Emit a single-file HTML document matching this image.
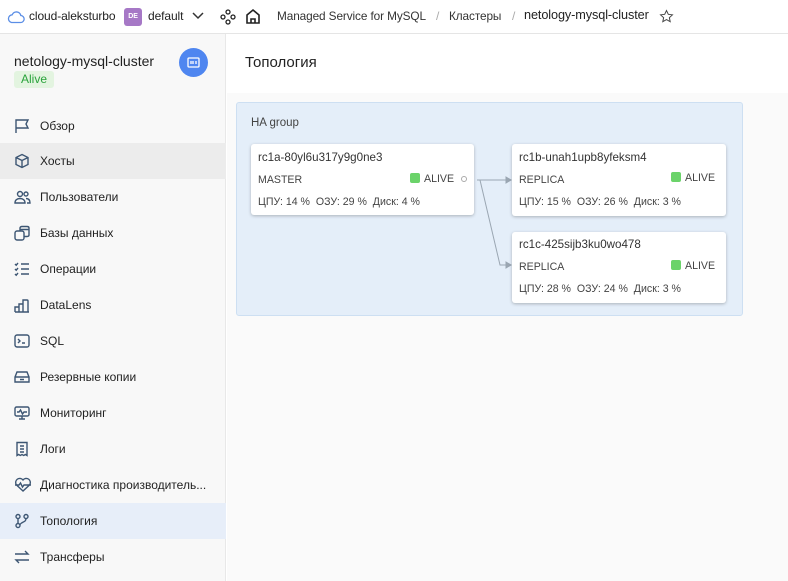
<!DOCTYPE html>
<html><head><meta charset="utf-8"><style>
*{box-sizing:border-box;margin:0;padding:0}
body{width:788px;height:581px;overflow:hidden;background:#fff;font-family:"Liberation Sans","Noto Sans CJK SC",sans-serif;color:#222;position:relative}
.hdr{position:absolute;left:0;top:0;width:788px;height:34px;border-bottom:1px solid #e5e5e5;font-size:12px;letter-spacing:-0.1px}
.hdr span{position:absolute;top:9px;white-space:nowrap}
.side{position:absolute;left:0;top:34px;width:226px;height:547px;background:#f8f8f8;border-right:1px solid #e8e8e8}
.item{position:absolute;left:0;width:226px;height:36px;font-size:12px;line-height:36px;padding-left:40px;white-space:nowrap}
.item svg{position:absolute;left:14px;top:10px}
.main{position:absolute;left:227px;top:93px;width:561px;height:488px;background:#fafafa}
.grp{position:absolute;left:236px;top:102px;width:507px;height:214px;background:#e4eef9;border:1px solid #cddff2;border-radius:3px}
.card{position:absolute;background:#fff;border-radius:3px;box-shadow:0 1px 3px rgba(0,0,0,.25);font-size:10.6px;color:#444}
.card div{position:absolute;left:7px;white-space:nowrap}
.sq{display:inline-block;width:10px;height:10px;background:#6bd36a;border-radius:2px;vertical-align:-1px;margin-right:4px}
</style></head><body>
<div class="hdr">
<svg style="position:absolute;left:7px;top:10px" width="18" height="14" viewBox="0 0 18 14"><path d="M4.5 12.5h9a3.5 3.5 0 0 0 .3-7A4.5 4.5 0 0 0 5.2 4.8 3.9 3.9 0 0 0 4.5 12.5z" fill="none" stroke="#5b8ee6" stroke-width="1.3"/></svg>
<span style="left:29px;color:#222">cloud-aleksturbo</span>
<div style="position:absolute;left:124px;top:8px;width:18px;height:18px;background:#a678c6;border-radius:3px;color:#fff;font-size:7px;font-weight:bold;text-align:center;line-height:18px">DE</div>
<span style="left:148px">default</span>
<svg style="position:absolute;left:192px;top:12px" width="12" height="8"><path d="M1 1l5 5 5-5" fill="none" stroke="#333" stroke-width="1.5"/></svg>
<svg style="position:absolute;left:220px;top:9px" width="16" height="16" viewBox="0 0 16 16" fill="none" stroke="#222" stroke-width="1.3"><circle cx="8" cy="3" r="2"/><circle cx="3" cy="8" r="2"/><circle cx="13" cy="8" r="2"/><circle cx="8" cy="13" r="2"/></svg>
<svg style="position:absolute;left:245px;top:8px" width="16" height="17" viewBox="0 0 16 17" fill="none" stroke="#222" stroke-width="1.6"><path d="M2 7l6-5 6 5v8H2z"/><path d="M6 15v-4h4v4"/></svg>
<span style="left:277px;color:#333;font-size:11.8px">Managed Service for MySQL</span>
<span style="left:436px;color:#aaa">/</span>
<span style="left:449px;color:#333;font-size:11.8px">Кластеры</span>
<span style="left:512px;color:#aaa">/</span>
<span style="left:524px;color:#222;font-size:12.7px;top:8px">netology-mysql-cluster</span>
<svg style="position:absolute;left:659px;top:9px" width="15" height="15" viewBox="0 0 24 24"><path d="M12 2.5l2.9 6 6.6.8-4.9 4.5 1.3 6.5L12 17l-5.9 3.3 1.3-6.5L2.5 9.3l6.6-.8z" fill="none" stroke="#444" stroke-width="1.6"/></svg>
</div>
<div class="side">
<div style="position:absolute;left:14px;top:19px;font-size:14px;color:#222">netology-mysql-cluster</div>
<div style="position:absolute;left:14px;top:37px;height:17px;padding:0 7px;background:#e3f4e0;border-radius:3px;color:#2aa33b;font-size:12px;line-height:17px">Alive</div>
<div style="position:absolute;left:179px;top:14px;width:29px;height:29px;border-radius:50%;background:#4f86f0"><svg style="position:absolute;left:8px;top:8px" width="13" height="13" viewBox="0 0 13 13" fill="none" stroke="#fff" stroke-width="1.3"><rect x="1" y="2" width="11" height="9" rx="1"/><path d="M4 5v3M6 5v3M9 5v3"/></svg></div>
</div>
<div class="item" style="top:108px">Обзор<svg width="16" height="16" viewBox="0 0 16 16" fill="none" stroke="#3d5673" stroke-width="1.4"><path d="M2 15V2h12l-2 4 2 4H2"/></svg></div>
<div class="item" style="top:143px;background:#ececec">Хосты<svg width="16" height="16" viewBox="0 0 16 16" fill="none" stroke="#3d5673" stroke-width="1.4"><path d="M8 1.5l6 3v7l-6 3-6-3v-7zM2 4.5l6 3 6-3M8 7.5v7"/></svg></div>
<div class="item" style="top:179px">Пользователи<svg width="17" height="16" viewBox="0 0 17 16" fill="none" stroke="#3d5673" stroke-width="1.4"><circle cx="6" cy="5" r="2.5"/><circle cx="12" cy="5" r="2"/><path d="M1 14c0-3 2-4.5 5-4.5s5 1.5 5 4.5zM12 9.5c2.5 0 4 1.3 4 4.5h-3"/></svg></div>
<div class="item" style="top:215px">Базы данных<svg width="17" height="16" viewBox="0 0 17 16" fill="none" stroke="#3d5673" stroke-width="1.4"><rect x="1" y="6" width="9" height="9" rx="2"/><path d="M6 6V3c0-1 1-1.5 2-1.5h5c1 0 2 .5 2 1.5v7c0 1-1 1.5-2 1.5h-3M6 4.5h9"/></svg></div>
<div class="item" style="top:251px">Операции<svg width="16" height="16" viewBox="0 0 16 16" fill="none" stroke="#3d5673" stroke-width="1.4"><path d="M1 3l1.2 1.2L4 2M1 8l1.2 1.2L4 7M1 13l1.2 1.2L4 12M7 3h8M7 8h8M7 13h8"/></svg></div>
<div class="item" style="top:287px">DataLens<svg width="16" height="16" viewBox="0 0 16 16" fill="none" stroke="#3d5673" stroke-width="1.4"><path d="M1 15V10h4v5M5 15V7h4v8M9 15V3h4a1 1 0 0 1 1 1v11zM1 15h14"/></svg></div>
<div class="item" style="top:323px">SQL<svg width="16" height="16" viewBox="0 0 16 16" fill="none" stroke="#3d5673" stroke-width="1.4"><rect x="1" y="2" width="14" height="12" rx="2"/><path d="M4 6l2 2-2 2M8 10h3"/></svg></div>
<div class="item" style="top:359px">Резервные копии<svg width="16" height="16" viewBox="0 0 16 16" fill="none" stroke="#3d5673" stroke-width="1.4"><path d="M1 8l2-5h10l2 5v5H1zM1 8h14M6 10.5h4"/></svg></div>
<div class="item" style="top:395px">Мониторинг<svg width="16" height="16" viewBox="0 0 16 16" fill="none" stroke="#3d5673" stroke-width="1.4"><rect x="1" y="2" width="14" height="9" rx="1.5"/><path d="M3 7h2l1.5-2 2 4 1.5-2h3M8 11v3M5 14h6"/></svg></div>
<div class="item" style="top:431px">Логи<svg width="16" height="16" viewBox="0 0 16 16" fill="none" stroke="#3d5673" stroke-width="1.4"><path d="M3 1.5h10v13l-1.6-1-1.7 1-1.7-1-1.7 1-1.7-1-1.6 1zM6 5h4M6 8h4M6 11h4"/></svg></div>
<div class="item" style="top:467px">Диагностика производитель...<svg width="18" height="16" viewBox="0 0 18 16" fill="none" stroke="#3d5673" stroke-width="1.4"><path d="M9 14L2.5 8A3.5 3.5 0 0 1 9 3a3.5 3.5 0 0 1 6.5 5zM1 8h4l1.5-2 2 4 1.5-2h7"/></svg></div>
<div class="item" style="top:503px;background:#e7eef9">Топология<svg width="16" height="16" viewBox="0 0 16 16" fill="none" stroke="#3d5673" stroke-width="1.4"><circle cx="4" cy="3.5" r="2"/><circle cx="12" cy="3.5" r="2"/><circle cx="4" cy="12.5" r="2"/><path d="M4 5.5v5M12 5.5c0 4-4 3-6 6"/></svg></div>
<div class="item" style="top:539px">Трансферы<svg width="16" height="16" viewBox="0 0 16 16" fill="none" stroke="#3d5673" stroke-width="1.4"><path d="M1 5h13l-3-3M15 11H2l3 3"/></svg></div>
<div style="position:absolute;left:245px;top:54px;font-size:15px;color:#222">Топология</div>
<div class="main"></div>
<div class="grp"><div style="position:absolute;left:14px;top:14px;font-size:11.5px;color:#444">HA group</div></div>
<svg style="position:absolute;left:470px;top:170px" width="45" height="105" viewBox="0 0 45 105" fill="none" stroke="#9aa6b2" stroke-width="1"><path d="M7 10h30M10 10l20 85h7"/><path d="M36 7l5 3-5 3zM36 92l5 3-5 3z" fill="#9aa6b2"/></svg>
<div class="card" style="left:251px;top:144px;width:223px;height:71px">
<div style="top:7px;font-size:11.6px;color:#333">rc1a-80yl6u317y9g0ne3</div>
<div style="top:30px">MASTER</div>
<div style="top:29px;left:159px"><span class="sq"></span>ALIVE <span style="display:inline-block;width:6px;height:6px;border:1px solid #aaa;border-radius:50%;margin-left:4px"></span></div>
<div style="top:52px">ЦПУ: 14 %&nbsp; ОЗУ: 29 %&nbsp; Диск: 4 %</div>
</div>
<div class="card" style="left:512px;top:144px;width:214px;height:72px">
<div style="top:7px;font-size:11.6px;color:#333">rc1b-unah1upb8yfeksm4</div>
<div style="top:30px">REPLICA</div>
<div style="top:28px;left:159px"><span class="sq"></span>ALIVE</div>
<div style="top:52px">ЦПУ: 15 %&nbsp; ОЗУ: 26 %&nbsp; Диск: 3 %</div>
</div>
<div class="card" style="left:512px;top:232px;width:214px;height:71px">
<div style="top:6px;font-size:11.6px;color:#333">rc1c-425sijb3ku0wo478</div>
<div style="top:29px">REPLICA</div>
<div style="top:28px;left:159px"><span class="sq"></span>ALIVE</div>
<div style="top:51px">ЦПУ: 28 %&nbsp; ОЗУ: 24 %&nbsp; Диск: 3 %</div>
</div>
</body></html>
